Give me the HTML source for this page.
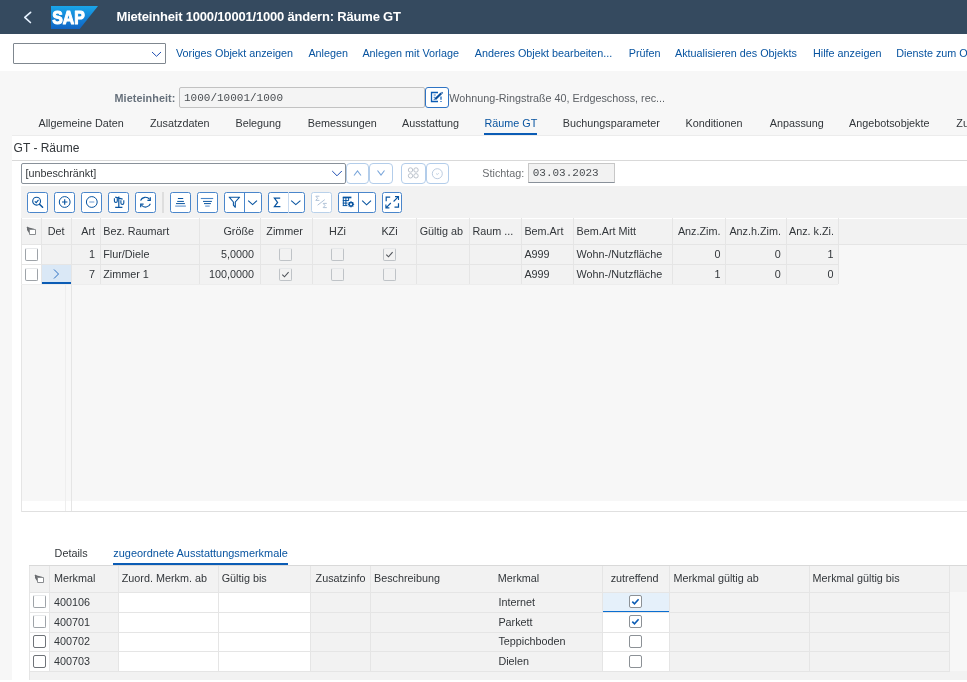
<!DOCTYPE html>
<html><head><meta charset="utf-8"><title>SAP</title>
<style>
html,body{margin:0;padding:0;width:967px;height:682px;overflow:hidden;background:#f7f7f7}
#r{position:relative;width:967px;height:682px;overflow:hidden;will-change:transform}
#r>div{position:absolute}
.t{position:absolute;line-height:1;white-space:nowrap;font-family:"Liberation Sans",sans-serif}
</style></head><body><div id="r"><div style="left:0px;top:0px;width:967px;height:34px;background:#354a5f"></div><svg style="position:absolute;left:22px;top:11px;" width="12" height="14" viewBox="0 0 12 14"><path d="M8.6 1.3 L2.8 6.3 L8.4 11.5" fill="none" stroke="#e6f2ff" stroke-width="1.7" stroke-linecap="round" stroke-linejoin="round"/></svg><svg style="position:absolute;left:51px;top:6px;" width="47" height="23" viewBox="0 0 47 23"><defs><linearGradient id="sg" x1="0" y1="0" x2="0" y2="1"><stop offset="0" stop-color="#1aa6ea"/><stop offset="1" stop-color="#0f63c4"/></linearGradient></defs><path d="M0 0 H47 L28.7 23 H0 Z" fill="url(#sg)"/><text x="1.3" y="17.8" font-family="Liberation Sans" font-weight="700" font-size="18.6" fill="#fff" stroke="#fff" stroke-width="1.1" stroke-linejoin="round" textLength="32.5" lengthAdjust="spacingAndGlyphs">SAP</text></svg><div class="t" style="left:116.5px;top:9.6px;font-size:13px;color:#ffffff;font-weight:700;font-family:'Liberation Sans';letter-spacing:-0.19px">Mieteinheit 1000/10001/1000 ändern: Räume GT</div><div style="left:0px;top:34px;width:967px;height:37px;background:#ffffff"></div><div style="left:13px;top:43px;width:153px;height:21px;box-sizing:border-box;border:1px solid #7f878f;border-radius:1px;background:#fff"></div><svg style="position:absolute;left:150px;top:49px;" width="12" height="10" viewBox="0 0 12 10"><path d="M2 3 L6.5 7.3 L11 3" fill="none" stroke="#1f4fb3" stroke-width="1"/></svg><div class="t" style="left:176px;top:48px;font-size:10.8px;color:#0854a0;font-weight:400;font-family:'Liberation Sans';">Voriges Objekt anzeigen</div><div class="t" style="left:308.4px;top:48px;font-size:10.8px;color:#0854a0;font-weight:400;font-family:'Liberation Sans';">Anlegen</div><div class="t" style="left:362.4px;top:48px;font-size:10.8px;color:#0854a0;font-weight:400;font-family:'Liberation Sans';">Anlegen mit Vorlage</div><div class="t" style="left:474.7px;top:48px;font-size:10.8px;color:#0854a0;font-weight:400;font-family:'Liberation Sans';">Anderes Objekt bearbeiten...</div><div class="t" style="left:628.8px;top:48px;font-size:10.8px;color:#0854a0;font-weight:400;font-family:'Liberation Sans';">Prüfen</div><div class="t" style="left:675px;top:48px;font-size:10.8px;color:#0854a0;font-weight:400;font-family:'Liberation Sans';">Aktualisieren des Objekts</div><div class="t" style="left:813px;top:48px;font-size:10.8px;color:#0854a0;font-weight:400;font-family:'Liberation Sans';">Hilfe anzeigen</div><div class="t" style="left:896.3px;top:48px;font-size:10.8px;color:#0854a0;font-weight:400;font-family:'Liberation Sans';">Dienste zum Objekt</div><div style="left:0px;top:71px;width:967px;height:611px;background:#f7f7f7"></div><div class="t" style="left:114.5px;top:93px;font-size:10.8px;color:#66707b;font-weight:700;font-family:'Liberation Sans';letter-spacing:0.08px">Mieteinheit:</div><div style="left:179px;top:87px;width:246px;height:21px;box-sizing:border-box;border:1px solid #c2c2c2;background:#f4f4f4;border-radius:2px"></div><div class="t" style="left:184px;top:93px;font-size:11px;color:#4a4e52;font-weight:400;font-family:'Liberation Mono';">1000/10001/1000</div><div style="left:425px;top:87px;width:24px;height:21px;box-sizing:border-box;border:1px solid #2f74c4;background:#fff;border-radius:3px"></div><svg style="position:absolute;left:425px;top:87px;" width="24" height="21" viewBox="0 0 24 21"><path d="M13 5.5 H6.5 V14.5 H13" fill="none" stroke="#0b5cb5" stroke-width="1.3"/><path d="M8.6 8 H10.8 M8.6 10.3 H10.3 M8.6 12.4 H10" stroke="#3f7fc8" stroke-width="1"/><path d="M10.2 12.2 L16.3 6.2" stroke="#0b4f9c" stroke-width="2.2"/><path d="M16.6 5.2 L17.8 6.4" stroke="#0b4f9c" stroke-width="1.2"/><path d="M16 9.5 V12.8 M16 14 V15" stroke="#0b5cb5" stroke-width="1.2"/></svg><div class="t" style="left:449.2px;top:93px;font-size:10.8px;color:#5c6065;font-weight:400;font-family:'Liberation Sans';">Wohnung-Ringstraße 40, Erdgeschoss, rec...</div><div class="t" style="left:38.5px;top:118px;font-size:10.8px;color:#32363a;font-weight:400;font-family:'Liberation Sans';">Allgemeine Daten</div><div class="t" style="left:150px;top:118px;font-size:10.8px;color:#32363a;font-weight:400;font-family:'Liberation Sans';">Zusatzdaten</div><div class="t" style="left:235.5px;top:118px;font-size:10.8px;color:#32363a;font-weight:400;font-family:'Liberation Sans';">Belegung</div><div class="t" style="left:307.8px;top:118px;font-size:10.8px;color:#32363a;font-weight:400;font-family:'Liberation Sans';">Bemessungen</div><div class="t" style="left:402px;top:118px;font-size:10.8px;color:#32363a;font-weight:400;font-family:'Liberation Sans';">Ausstattung</div><div class="t" style="left:484.5px;top:118px;font-size:10.8px;color:#0854a0;font-weight:400;font-family:'Liberation Sans';">Räume GT</div><div class="t" style="left:562.7px;top:118px;font-size:10.8px;color:#32363a;font-weight:400;font-family:'Liberation Sans';">Buchungsparameter</div><div class="t" style="left:685.5px;top:118px;font-size:10.8px;color:#32363a;font-weight:400;font-family:'Liberation Sans';">Konditionen</div><div class="t" style="left:769.8px;top:118px;font-size:10.8px;color:#32363a;font-weight:400;font-family:'Liberation Sans';">Anpassung</div><div class="t" style="left:849px;top:118px;font-size:10.8px;color:#32363a;font-weight:400;font-family:'Liberation Sans';">Angebotsobjekte</div><div class="t" style="left:956.3px;top:118px;font-size:10.8px;color:#32363a;font-weight:400;font-family:'Liberation Sans';">Zusatzfelder</div><div style="left:484px;top:133px;width:53px;height:2px;background:#0b5cb5"></div><div style="left:12px;top:135px;width:955px;height:1px;background:#ececec"></div><div style="left:12px;top:136px;width:955px;height:546px;background:#ffffff"></div><div class="t" style="left:13.6px;top:142px;font-size:12px;color:#32363a;font-weight:400;font-family:'Liberation Sans';">GT - Räume</div><div style="left:12px;top:160px;width:955px;height:1px;background:#d9d9d9"></div><div style="left:21px;top:163px;width:325px;height:21px;box-sizing:border-box;border:1px solid #89919a;border-radius:2px;background:#fff"></div><div class="t" style="left:25.4px;top:168px;font-size:10.8px;color:#32363a;font-weight:400;font-family:'Liberation Sans';">[unbeschränkt]</div><svg style="position:absolute;left:331px;top:169px;" width="12" height="10" viewBox="0 0 12 10"><path d="M1.2 2 L6 6.8 L10.8 2" fill="none" stroke="#1f4fb3" stroke-width="1"/></svg><div style="left:346px;top:163px;width:23px;height:21px;box-sizing:border-box;border:1px solid #b3cdea;border-radius:4px;background:#fff"></div><div style="left:369px;top:163px;width:24px;height:21px;box-sizing:border-box;border:1px solid #b3cdea;border-radius:4px;background:#fff"></div><svg style="position:absolute;left:346px;top:163px;" width="23" height="21" viewBox="0 0 23 21"><path d="M8 12.5 L11.5 8 L15 12.5" fill="none" stroke="#7aa6da" stroke-width="1.1"/></svg><svg style="position:absolute;left:369px;top:163px;" width="24" height="21" viewBox="0 0 24 21"><path d="M8.5 7.5 L12 12 L15.5 7.5" fill="none" stroke="#7aa6da" stroke-width="1.1"/></svg><div style="left:401px;top:163px;width:25px;height:21px;box-sizing:border-box;border:1px solid #b3cdea;border-radius:4px;background:#fff"></div><div style="left:426px;top:163px;width:23px;height:21px;box-sizing:border-box;border:1px solid #b3cdea;border-radius:4px;background:#fff"></div><svg style="position:absolute;left:401px;top:163px;" width="25" height="21" viewBox="0 0 25 21"><g fill="none" stroke="#b4bcc6" stroke-width="0.9"><circle cx="9.5" cy="7" r="2.2"/><circle cx="15" cy="7" r="2.2"/><circle cx="9.5" cy="12.8" r="2.2"/><circle cx="15" cy="12.8" r="2.2"/></g></svg><svg style="position:absolute;left:426px;top:163px;" width="23" height="21" viewBox="0 0 23 21"><circle cx="11.3" cy="10.7" r="5" fill="none" stroke="#b4c6dc" stroke-width="0.9"/><path d="M10 10.5 L11.3 11.5 L12.8 10.2" fill="none" stroke="#b4c6dc" stroke-width="0.8"/></svg><div class="t" style="left:482.3px;top:168px;font-size:10.8px;color:#6a6d70;font-weight:400;font-family:'Liberation Sans';">Stichtag:</div><div style="left:528px;top:163px;width:87px;height:20px;box-sizing:border-box;border:1px solid #c7c7c7;border-bottom-color:#89919a;background:#f2f2f2"></div><div class="t" style="left:532.7px;top:168px;font-size:11px;color:#4a4e52;font-weight:400;font-family:'Liberation Mono';">03.03.2023</div><div style="left:21px;top:186px;width:946px;height:32px;background:#f2f2f2"></div><div style="left:27px;top:192px;width:21px;height:21px;box-sizing:border-box;border:1px solid #4a86cb;border-radius:2.5px;background:#fff"></div><svg style="position:absolute;left:27px;top:192px;" width="21" height="21" viewBox="0 0 21 21"><circle cx="9.6" cy="9.2" r="3.9" fill="none" stroke="#0854a0" stroke-width="1.1"/><path d="M7.8 9.3 L9.2 10.6 L11.5 7.9" fill="none" stroke="#0854a0" stroke-width="1.1"/><path d="M12.5 12.2 L15.6 15.3" stroke="#0854a0" stroke-width="1.5" stroke-linecap="round"/></svg><div style="left:54px;top:192px;width:21px;height:21px;box-sizing:border-box;border:1px solid #4a86cb;border-radius:2.5px;background:#fff"></div><svg style="position:absolute;left:54px;top:192px;" width="21" height="21" viewBox="0 0 21 21"><circle cx="10.7" cy="10" r="5.4" fill="none" stroke="#0854a0" stroke-width="1"/><path d="M10.7 7.3 V12.7 M8 10 H13.4" stroke="#0854a0" stroke-width="1.15"/></svg><div style="left:81px;top:192px;width:21px;height:21px;box-sizing:border-box;border:1px solid #4a86cb;border-radius:2.5px;background:#fff"></div><svg style="position:absolute;left:81px;top:192px;" width="21" height="21" viewBox="0 0 21 21"><circle cx="10.8" cy="10" r="5.4" fill="none" stroke="#0854a0" stroke-width="1"/><path d="M8.3 10 H13.3" stroke="#6d9bd0" stroke-width="1"/></svg><div style="left:108px;top:192px;width:21px;height:21px;box-sizing:border-box;border:1px solid #4a86cb;border-radius:2.5px;background:#fff"></div><svg style="position:absolute;left:108px;top:192px;" width="21" height="21" viewBox="0 0 21 21"><path d="M10.8 4.5 V15.4 M7.2 15.4 H14.4 M7.2 5.2 L14.6 7.2" fill="none" stroke="#0854a0" stroke-width="1.2"/><path d="M6.4 6.3 V8.9 A1.45 1.45 0 0 0 9.3 8.9 V6.3 M12.9 8.3 V10.9 A1.45 1.45 0 0 0 15.8 10.9 V8.3" fill="none" stroke="#0854a0" stroke-width="1.1"/></svg><div style="left:135px;top:192px;width:21px;height:21px;box-sizing:border-box;border:1px solid #4a86cb;border-radius:2.5px;background:#fff"></div><svg style="position:absolute;left:135px;top:192px;" width="21" height="21" viewBox="0 0 21 21"><path d="M5.6 8.6 A5.2 5.2 0 0 1 14.6 7.4" fill="none" stroke="#0854a0" stroke-width="1.1"/><path d="M15.4 11.8 A5.2 5.2 0 0 1 6.4 13" fill="none" stroke="#0854a0" stroke-width="1.1"/><path d="M15.3 5.2 V8.3 H12.4" fill="none" stroke="#0854a0" stroke-width="1.2"/><path d="M5.7 15.2 V12.1 H8.6" fill="none" stroke="#0854a0" stroke-width="1.2"/></svg><div style="left:162px;top:192px;width:2px;height:21px;background:#dedede"></div><div style="left:170px;top:192px;width:21px;height:21px;box-sizing:border-box;border:1px solid #4a86cb;border-radius:2.5px;background:#fff"></div><svg style="position:absolute;left:170px;top:192px;" width="21" height="21" viewBox="0 0 21 21"><path d="M7.9 6.5 H13.2 M7.2 9.4 H13.9 M6 11.6 H14.9" stroke="#0854a0" stroke-width="1"/><path d="M5.2 14.1 H15.9" stroke="#6d9bd0" stroke-width="1.2"/></svg><div style="left:197px;top:192px;width:21px;height:21px;box-sizing:border-box;border:1px solid #4a86cb;border-radius:2.5px;background:#fff"></div><svg style="position:absolute;left:197px;top:192px;" width="21" height="21" viewBox="0 0 21 21"><path d="M3.8 6.5 H16.2" stroke="#4a86c8" stroke-width="1.1"/><path d="M6 9.4 H14.9 M7 11.6 H13.9" stroke="#0854a0" stroke-width="1"/><path d="M8.2 14.1 H12.7" stroke="#6d9bd0" stroke-width="1.2"/></svg><div style="left:224px;top:192px;width:38px;height:21px;box-sizing:border-box;border:1px solid #4a86cb;border-radius:2.5px;background:#fff"></div><div style="left:244px;top:192px;width:1px;height:21px;background:#4a86cb"></div><svg style="position:absolute;left:224px;top:192px;" width="21" height="21" viewBox="0 0 21 21"><path d="M5.2 5.2 H15.6 L11.3 10 V15.3 L9.4 13.2 V10 Z" fill="none" stroke="#0854a0" stroke-width="1.1" stroke-linejoin="round"/></svg><svg style="position:absolute;left:244px;top:192px;" width="18" height="21" viewBox="0 0 18 21"><path d="M4.2 8.6 L8.6 12.6 L13 8.6" fill="none" stroke="#0854a0" stroke-width="1.1"/></svg><div style="left:268px;top:192px;width:37px;height:21px;box-sizing:border-box;border:1px solid #4a86cb;border-radius:2.5px;background:#fff"></div><div style="left:288px;top:192px;width:1px;height:21px;background:#4a86cb"></div><div style="left:288px;top:192px;width:1px;height:21px;background:#c9dbf0"></div><svg style="position:absolute;left:268px;top:192px;" width="21" height="21" viewBox="0 0 21 21"><path d="M12.2 6.2 H6.4 L9.6 10.4 L6.4 14.6 H12.4" fill="none" stroke="#0854a0" stroke-width="1.2"/></svg><svg style="position:absolute;left:288px;top:192px;" width="17" height="21" viewBox="0 0 17 21"><path d="M3.2 8.6 L7.8 12.6 L12.4 8.6" fill="none" stroke="#0854a0" stroke-width="1.1"/></svg><div style="left:311px;top:192px;width:21px;height:21px;box-sizing:border-box;border:1px solid #b9d1ea;border-radius:2.5px;background:#fff"></div><svg style="position:absolute;left:311px;top:192px;" width="21" height="21" viewBox="0 0 21 21"><path d="M8.4 4.2 H4.8 L6.6 6.3 L4.8 8.4 H8.4 M6.6 13.2 L13.8 7.6 M15.8 11.4 H12.2 L14 13.5 L12.2 15.6 H15.8" fill="none" stroke="#a8bcd4" stroke-width="0.9"/></svg><div style="left:338px;top:192px;width:38px;height:21px;box-sizing:border-box;border:1px solid #4a86cb;border-radius:2.5px;background:#fff"></div><div style="left:358px;top:192px;width:1px;height:21px;background:#4a86cb"></div><svg style="position:absolute;left:338px;top:192px;" width="21" height="21" viewBox="0 0 21 21"><path d="M4.8 4.6 H13.4 V6.3 H4.8 Z" fill="#0854a0"/><path d="M5.3 5 V13.8 M4.8 8.6 H10.5 M4.8 11.1 H9.6 M4.8 13.6 H9.4 M7.9 6 V13.8 M10.6 6 V8.8" fill="none" stroke="#0854a0" stroke-width="1"/><path d="M16.40 12.30 L15.31 13.26 L15.40 14.70 L13.96 14.61 L13.00 15.70 L12.04 14.61 L10.60 14.70 L10.69 13.26 L9.60 12.30 L10.69 11.34 L10.60 9.90 L12.04 9.99 L13.00 8.90 L13.96 9.99 L15.40 9.90 L15.31 11.34 Z" fill="#0854a0"/><circle cx="13" cy="12.3" r="1.1" fill="#fff"/></svg><svg style="position:absolute;left:358px;top:192px;" width="18" height="21" viewBox="0 0 18 21"><path d="M4.2 8.6 L8.6 12.8 L13 8.6" fill="none" stroke="#0854a0" stroke-width="1.1"/></svg><div style="left:382px;top:192px;width:20px;height:21px;box-sizing:border-box;border:1px solid #4a86cb;border-radius:2.5px;background:#fff"></div><svg style="position:absolute;left:382px;top:192px;" width="20" height="21" viewBox="0 0 20 21"><path d="M4.2 9.2 V5.2 H8.2 M16.5 11.2 V15.2 H12.5" fill="none" stroke="#0854a0" stroke-width="1.2"/><path d="M13 4.6 H16.5 V8.1 M16.4 4.7 L11.6 9.5 M3.9 12.4 V15.9 H7.4 M4 15.8 L8.8 11" fill="none" stroke="#0854a0" stroke-width="1.1"/></svg><div style="left:21px;top:218px;width:946px;height:1px;background:#ffffff"></div><div style="left:21px;top:219px;width:946px;height:25px;background:#f2f2f2"></div><div style="left:21px;top:244px;width:817px;height:40px;background:#f2f2f2"></div><div style="left:838px;top:244px;width:129px;height:40px;background:#f7f7f7"></div><div style="left:21px;top:244px;width:20px;height:40px;background:#ffffff"></div><div style="left:21px;top:284px;width:946px;height:217px;background:#f7f7f7"></div><div style="left:21px;top:501px;width:946px;height:10px;background:#ffffff"></div><div style="left:21px;top:511px;width:946px;height:1px;background:#e0e0e0"></div><div style="left:21px;top:218px;width:1px;height:294px;background:#e5e5e5"></div><div style="left:21px;top:244px;width:946px;height:1px;background:#e5e5e5"></div><div style="left:21px;top:264px;width:817px;height:1px;background:#e5e5e5"></div><div style="left:21px;top:284px;width:817px;height:1px;background:#ededed"></div><div style="left:41px;top:218px;width:1px;height:66px;background:#e5e5e5"></div><div style="left:71px;top:218px;width:1px;height:66px;background:#e5e5e5"></div><div style="left:100px;top:218px;width:1px;height:66px;background:#e5e5e5"></div><div style="left:199px;top:218px;width:1px;height:66px;background:#e5e5e5"></div><div style="left:260px;top:218px;width:1px;height:66px;background:#e5e5e5"></div><div style="left:312px;top:218px;width:1px;height:66px;background:#e5e5e5"></div><div style="left:416px;top:218px;width:1px;height:66px;background:#e5e5e5"></div><div style="left:469px;top:218px;width:1px;height:66px;background:#e5e5e5"></div><div style="left:521px;top:218px;width:1px;height:66px;background:#e5e5e5"></div><div style="left:573px;top:218px;width:1px;height:66px;background:#e5e5e5"></div><div style="left:672px;top:218px;width:1px;height:66px;background:#e5e5e5"></div><div style="left:725px;top:218px;width:1px;height:66px;background:#e5e5e5"></div><div style="left:786px;top:218px;width:1px;height:66px;background:#e5e5e5"></div><div style="left:838px;top:218px;width:1px;height:66px;background:#e5e5e5"></div><div style="left:71px;top:284px;width:1px;height:227px;background:#e5e5e5"></div><div style="left:65px;top:285px;width:1px;height:226px;background:#eeeeee"></div><div style="left:42px;top:265px;width:29px;height:19px;background:#dae8f6"></div><div style="left:42px;top:282px;width:29px;height:2px;background:#0b5cb5"></div><svg style="position:absolute;left:50px;top:267px;" width="12" height="14" viewBox="0 0 12 14"><path d="M4 2.5 L8.5 7 L4 11.5" fill="none" stroke="#2b6fc2" stroke-width="1"/></svg><svg style="position:absolute;left:26px;top:226px;" width="11" height="10" viewBox="0 0 11 10"><path d="M1 1 L7 2.5 L8.5 3 L3 3 L3 7 L1 4 Z" fill="#6a6d70"/><path d="M3.5 3.5 H9.5 V8.5 H3.5 Z" fill="#fff" stroke="#8a8d90" stroke-width="1"/><path d="M1 1 L3.5 3.5" stroke="#6a6d70" stroke-width="1.4"/></svg><div style="left:25px;top:248px;width:13px;height:13px;box-sizing:border-box;border:1px solid #9ea3a8;border-top-color:#e6e8ea;border-radius:2px;background:#fff"></div><div style="left:25px;top:268px;width:13px;height:13px;box-sizing:border-box;border:1px solid #9ea3a8;border-top-color:#e6e8ea;border-radius:2px;background:#fff"></div><div class="t" style="left:47.8px;top:226px;font-size:10.8px;color:#32363a;font-weight:400;font-family:'Liberation Sans';">Det</div><div class="t" style="right:872px;top:226px;font-size:10.8px;color:#32363a;font-weight:400;font-family:'Liberation Sans';">Art</div><div class="t" style="left:103.2px;top:226px;font-size:10.8px;color:#32363a;font-weight:400;font-family:'Liberation Sans';">Bez. Raumart</div><div class="t" style="right:713px;top:226px;font-size:10.8px;color:#32363a;font-weight:400;font-family:'Liberation Sans';">Größe</div><div class="t" style="left:266.3px;top:226px;font-size:10.8px;color:#32363a;font-weight:400;font-family:'Liberation Sans';">Zimmer</div><div class="t" style="left:137.5px;width:400px;text-align:center;top:226px;font-size:10.8px;color:#32363a;font-weight:400;font-family:'Liberation Sans';">HZi</div><div class="t" style="left:189.5px;width:400px;text-align:center;top:226px;font-size:10.8px;color:#32363a;font-weight:400;font-family:'Liberation Sans';">KZi</div><div class="t" style="left:419.7px;top:226px;font-size:10.8px;color:#32363a;font-weight:400;font-family:'Liberation Sans';">Gültig ab</div><div class="t" style="left:472.5px;top:226px;font-size:10.8px;color:#32363a;font-weight:400;font-family:'Liberation Sans';">Raum ...</div><div class="t" style="left:524.4px;top:226px;font-size:10.8px;color:#32363a;font-weight:400;font-family:'Liberation Sans';">Bem.Art</div><div class="t" style="left:576.6px;top:226px;font-size:10.8px;color:#32363a;font-weight:400;font-family:'Liberation Sans';">Bem.Art Mitt</div><div class="t" style="right:246.5px;top:226px;font-size:10.8px;color:#32363a;font-weight:400;font-family:'Liberation Sans';">Anz.Zim.</div><div class="t" style="left:729.4px;top:226px;font-size:10.8px;color:#32363a;font-weight:400;font-family:'Liberation Sans';">Anz.h.Zim.</div><div class="t" style="left:789px;top:226px;font-size:10.8px;color:#32363a;font-weight:400;font-family:'Liberation Sans';">Anz. k.Zi.</div><div class="t" style="right:872px;top:249px;font-size:10.8px;color:#32363a;font-weight:400;font-family:'Liberation Sans';">1</div><div class="t" style="left:103.2px;top:249px;font-size:10.8px;color:#32363a;font-weight:400;font-family:'Liberation Sans';">Flur/Diele</div><div class="t" style="right:713px;top:249px;font-size:10.8px;color:#32363a;font-weight:400;font-family:'Liberation Sans';">5,0000</div><div class="t" style="left:524.4px;top:249px;font-size:10.8px;color:#32363a;font-weight:400;font-family:'Liberation Sans';">A999</div><div class="t" style="left:576.6px;top:249px;font-size:10.8px;color:#32363a;font-weight:400;font-family:'Liberation Sans';">Wohn-/Nutzfläche</div><div class="t" style="right:246.5px;top:249px;font-size:10.8px;color:#32363a;font-weight:400;font-family:'Liberation Sans';">0</div><div class="t" style="right:186.20000000000005px;top:249px;font-size:10.8px;color:#32363a;font-weight:400;font-family:'Liberation Sans';">0</div><div class="t" style="right:133.39999999999998px;top:249px;font-size:10.8px;color:#32363a;font-weight:400;font-family:'Liberation Sans';">1</div><div style="left:279px;top:248px;width:13px;height:13px;box-sizing:border-box;border:1px solid #bfc3c7;border-top-color:#e6e8ea;border-radius:2px;background:transparent"></div><div style="left:331px;top:248px;width:13px;height:13px;box-sizing:border-box;border:1px solid #bfc3c7;border-top-color:#e6e8ea;border-radius:2px;background:transparent"></div><div style="left:383px;top:248px;width:13px;height:13px;box-sizing:border-box;border:1px solid #bfc3c7;border-top-color:#e6e8ea;border-radius:2px;background:transparent"></div><svg style="position:absolute;left:383px;top:248px;" width="13" height="13" viewBox="0 0 13 13"><path d="M3.3 6.6 L5.5 8.8 L9.6 4.2" fill="none" stroke="#50545a" stroke-width="1.1"/></svg><div class="t" style="right:872px;top:269px;font-size:10.8px;color:#32363a;font-weight:400;font-family:'Liberation Sans';">7</div><div class="t" style="left:103.2px;top:269px;font-size:10.8px;color:#32363a;font-weight:400;font-family:'Liberation Sans';">Zimmer 1</div><div class="t" style="right:713px;top:269px;font-size:10.8px;color:#32363a;font-weight:400;font-family:'Liberation Sans';">100,0000</div><div class="t" style="left:524.4px;top:269px;font-size:10.8px;color:#32363a;font-weight:400;font-family:'Liberation Sans';">A999</div><div class="t" style="left:576.6px;top:269px;font-size:10.8px;color:#32363a;font-weight:400;font-family:'Liberation Sans';">Wohn-/Nutzfläche</div><div class="t" style="right:246.5px;top:269px;font-size:10.8px;color:#32363a;font-weight:400;font-family:'Liberation Sans';">1</div><div class="t" style="right:186.20000000000005px;top:269px;font-size:10.8px;color:#32363a;font-weight:400;font-family:'Liberation Sans';">0</div><div class="t" style="right:133.39999999999998px;top:269px;font-size:10.8px;color:#32363a;font-weight:400;font-family:'Liberation Sans';">0</div><div style="left:279px;top:268px;width:13px;height:13px;box-sizing:border-box;border:1px solid #bfc3c7;border-top-color:#e6e8ea;border-radius:2px;background:transparent"></div><svg style="position:absolute;left:279px;top:268px;" width="13" height="13" viewBox="0 0 13 13"><path d="M3.3 6.6 L5.5 8.8 L9.6 4.2" fill="none" stroke="#50545a" stroke-width="1.1"/></svg><div style="left:331px;top:268px;width:13px;height:13px;box-sizing:border-box;border:1px solid #bfc3c7;border-top-color:#e6e8ea;border-radius:2px;background:transparent"></div><div style="left:383px;top:268px;width:13px;height:13px;box-sizing:border-box;border:1px solid #bfc3c7;border-top-color:#e6e8ea;border-radius:2px;background:transparent"></div><div class="t" style="left:54.6px;top:548px;font-size:10.8px;color:#32363a;font-weight:400;font-family:'Liberation Sans';">Details</div><div class="t" style="left:113.3px;top:548px;font-size:10.95px;color:#0854a0;font-weight:400;font-family:'Liberation Sans';">zugeordnete Ausstattungsmerkmale</div><div style="left:29px;top:565px;width:938px;height:1px;background:#d9d9d9"></div><div style="left:113px;top:563px;width:175px;height:2px;background:#0b5cb5"></div><div style="left:29px;top:566px;width:938px;height:26px;background:#f2f2f2"></div><div style="left:29px;top:592px;width:921px;height:79px;background:#f2f2f2"></div><div style="left:950px;top:592px;width:17px;height:79px;background:#f7f7f7"></div><div style="left:29px;top:592px;width:20px;height:79px;background:#ffffff"></div><div style="left:119px;top:592px;width:99px;height:79px;background:#ffffff"></div><div style="left:219px;top:592px;width:91px;height:79px;background:#ffffff"></div><div style="left:603px;top:592px;width:67px;height:79px;background:#ffffff"></div><div style="left:603px;top:592px;width:67px;height:20px;background:#e5f0fa"></div><div style="left:603px;top:611px;width:67px;height:1px;background:#0a6ed1"></div><div style="left:29px;top:671px;width:938px;height:9px;background:#f2f2f2"></div><div style="left:29px;top:592px;width:921px;height:1px;background:#e5e5e5"></div><div style="left:29px;top:612px;width:921px;height:1px;background:#e5e5e5"></div><div style="left:29px;top:632px;width:921px;height:1px;background:#e5e5e5"></div><div style="left:29px;top:651px;width:921px;height:1px;background:#e5e5e5"></div><div style="left:29px;top:671px;width:921px;height:1px;background:#e5e5e5"></div><div style="left:49px;top:566px;width:1px;height:105px;background:#e5e5e5"></div><div style="left:118px;top:566px;width:1px;height:105px;background:#e5e5e5"></div><div style="left:218px;top:566px;width:1px;height:105px;background:#e5e5e5"></div><div style="left:310px;top:566px;width:1px;height:105px;background:#e5e5e5"></div><div style="left:370px;top:566px;width:1px;height:105px;background:#e5e5e5"></div><div style="left:602px;top:566px;width:1px;height:105px;background:#e5e5e5"></div><div style="left:669px;top:566px;width:1px;height:105px;background:#e5e5e5"></div><div style="left:809px;top:566px;width:1px;height:105px;background:#e5e5e5"></div><div style="left:949px;top:566px;width:1px;height:105px;background:#e5e5e5"></div><div style="left:29px;top:566px;width:1px;height:114px;background:#e5e5e5"></div><svg style="position:absolute;left:34px;top:574px;" width="11" height="10" viewBox="0 0 11 10"><path d="M1 1 L7 2.5 L8.5 3 L3 3 L3 7 L1 4 Z" fill="#6a6d70"/><path d="M3.5 3.5 H9.5 V8.5 H3.5 Z" fill="#fff" stroke="#8a8d90" stroke-width="1"/><path d="M1 1 L3.5 3.5" stroke="#6a6d70" stroke-width="1.4"/></svg><div class="t" style="left:54px;top:573px;font-size:10.8px;color:#32363a;font-weight:400;font-family:'Liberation Sans';">Merkmal</div><div class="t" style="left:121.7px;top:573px;font-size:10.8px;color:#32363a;font-weight:400;font-family:'Liberation Sans';">Zuord. Merkm. ab</div><div class="t" style="left:221.7px;top:573px;font-size:10.8px;color:#32363a;font-weight:400;font-family:'Liberation Sans';">Gültig bis</div><div class="t" style="left:315.6px;top:573px;font-size:10.8px;color:#32363a;font-weight:400;font-family:'Liberation Sans';">Zusatzinfo</div><div class="t" style="left:374px;top:573px;font-size:10.8px;color:#32363a;font-weight:400;font-family:'Liberation Sans';">Beschreibung</div><div class="t" style="left:497.8px;top:573px;font-size:10.8px;color:#32363a;font-weight:400;font-family:'Liberation Sans';">Merkmal</div><div class="t" style="left:610.7px;top:573px;font-size:10.8px;color:#32363a;font-weight:400;font-family:'Liberation Sans';">zutreffend</div><div class="t" style="left:673.5px;top:573px;font-size:10.8px;color:#32363a;font-weight:400;font-family:'Liberation Sans';">Merkmal gültig ab</div><div class="t" style="left:812.6px;top:573px;font-size:10.8px;color:#32363a;font-weight:400;font-family:'Liberation Sans';">Merkmal gültig bis</div><div class="t" style="left:54px;top:597px;font-size:10.8px;color:#32363a;font-weight:400;font-family:'Liberation Sans';">400106</div><div class="t" style="left:498.4px;top:597px;font-size:10.8px;color:#32363a;font-weight:400;font-family:'Liberation Sans';">Internet</div><div style="left:33px;top:595px;width:13px;height:13px;box-sizing:border-box;border:1px solid #9ea3a8;border-top-color:#e6e8ea;border-radius:2px;background:#fff"></div><div style="left:629px;top:595px;width:13px;height:13px;box-sizing:border-box;border:1px solid #8c9196;border-top-color:#8c9196;border-radius:2px;background:#fff"></div><svg style="position:absolute;left:629px;top:595px;" width="13" height="13" viewBox="0 0 13 13"><path d="M3.3 6.6 L5.5 8.8 L9.6 4.2" fill="none" stroke="#0b5cb5" stroke-width="1.6"/></svg><div class="t" style="left:54px;top:617px;font-size:10.8px;color:#32363a;font-weight:400;font-family:'Liberation Sans';">400701</div><div class="t" style="left:498.4px;top:617px;font-size:10.8px;color:#32363a;font-weight:400;font-family:'Liberation Sans';">Parkett</div><div style="left:33px;top:615px;width:13px;height:13px;box-sizing:border-box;border:1px solid #9ea3a8;border-top-color:#e6e8ea;border-radius:2px;background:#fff"></div><div style="left:629px;top:615px;width:13px;height:13px;box-sizing:border-box;border:1px solid #8c9196;border-top-color:#8c9196;border-radius:2px;background:#fff"></div><svg style="position:absolute;left:629px;top:615px;" width="13" height="13" viewBox="0 0 13 13"><path d="M3.3 6.6 L5.5 8.8 L9.6 4.2" fill="none" stroke="#0b5cb5" stroke-width="1.6"/></svg><div class="t" style="left:54px;top:636px;font-size:10.8px;color:#32363a;font-weight:400;font-family:'Liberation Sans';">400702</div><div class="t" style="left:498.4px;top:636px;font-size:10.8px;color:#32363a;font-weight:400;font-family:'Liberation Sans';">Teppichboden</div><div style="left:33px;top:635px;width:13px;height:13px;box-sizing:border-box;border:1px solid #6f7378;border-top-color:#6f7378;border-radius:2px;background:#fff"></div><div style="left:629px;top:635px;width:13px;height:13px;box-sizing:border-box;border:1px solid #8c9196;border-top-color:#8c9196;border-radius:2px;background:#fff"></div><div class="t" style="left:54px;top:656px;font-size:10.8px;color:#32363a;font-weight:400;font-family:'Liberation Sans';">400703</div><div class="t" style="left:498.4px;top:656px;font-size:10.8px;color:#32363a;font-weight:400;font-family:'Liberation Sans';">Dielen</div><div style="left:33px;top:655px;width:13px;height:13px;box-sizing:border-box;border:1px solid #6f7378;border-top-color:#6f7378;border-radius:2px;background:#fff"></div><div style="left:629px;top:655px;width:13px;height:13px;box-sizing:border-box;border:1px solid #8c9196;border-top-color:#8c9196;border-radius:2px;background:#fff"></div><div style="left:0px;top:680px;width:967px;height:2px;background:#ffffff"></div></div></body></html>
